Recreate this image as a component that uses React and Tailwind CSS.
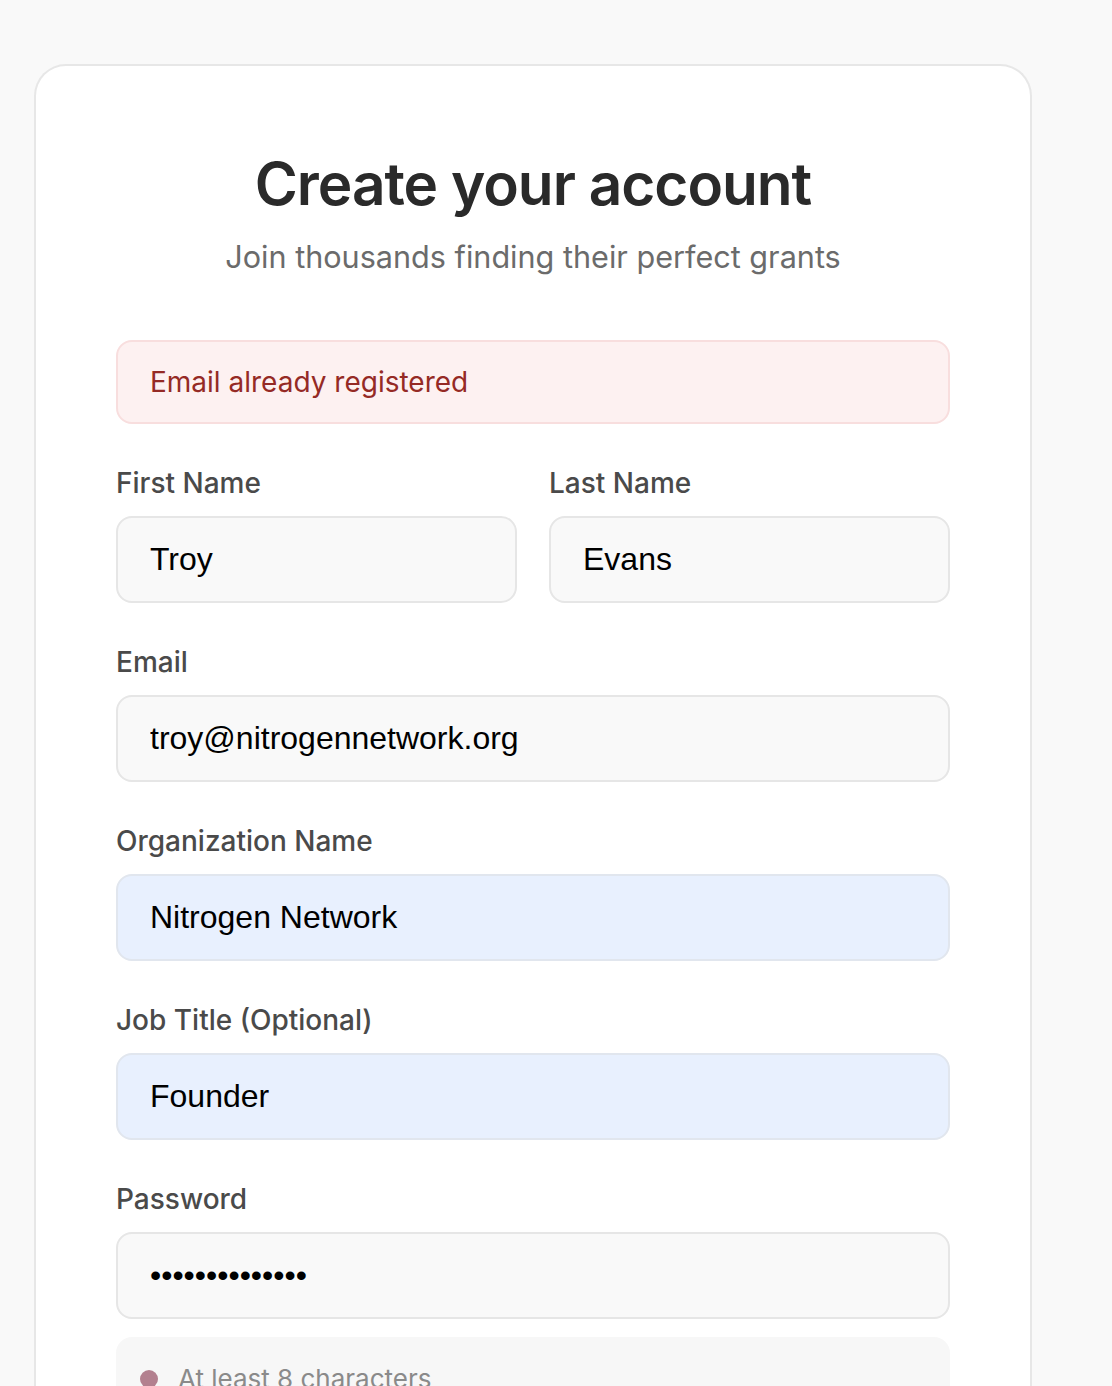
const Field = ({ label, value, type = "text", autofill = false }) => (
  <div className="flex flex-col">
    <label className="mb-[13px] text-[28px] leading-[40px] font-medium text-[#4a4a4a]">
      {label}
    </label>
    <input
      type={type}
      value={value}
      readOnly
      className={`h-[87px] w-full rounded-[16px] border-2 px-[32px] text-[32px] text-black outline-none font-['Liberation_Sans',Arial,sans-serif] ${
        autofill
          ? "bg-[#e8f0fe] border-[#e1e6ee]"
          : "bg-[#f9f9f9] border-[#e6e6e6]"
      }`}
    />
  </div>
);

export default function App() {
  return (
    <div className="relative min-h-[1386px] overflow-hidden bg-[#f9f9f9] pt-[64px] pl-[34px] font-['Inter',sans-serif]">
      <div className="w-[998px] rounded-t-[32px] border-2 border-b-0 border-[#e7e7e7] bg-white px-[80px] pt-[82px] pb-[80px]">
        <h1 className="text-center text-[58.5px] leading-[72px] font-semibold tracking-[-1px] text-[#2a2a2a]">
          Create your account
        </h1>
        <p className="mt-[17px] text-center text-[30.6px] leading-[40px] text-[#6b6b6b]">
          Join thousands finding their perfect grants
        </p>

        <div className="mt-[63px] rounded-[16px] border-2 border-[#f8dede] bg-[#fdf1f1] px-[32px] py-[20px] text-[28px] leading-[40px] text-[#952a25]">
          Email already registered
        </div>

        <div className="mt-[39px] flex flex-col gap-[39px]">
          <div className="grid grid-cols-2 gap-[32px]">
            <Field label="First Name" value="Troy" />
            <Field label="Last Name" value="Evans" />
          </div>
          <Field label="Email" value="troy@nitrogennetwork.org" type="email" />
          <Field label="Organization Name" value="Nitrogen Network" autofill />
          <Field label="Job Title (Optional)" value="Founder" autofill />
          <div className="flex flex-col">
            <Field label="Password" value="Nitrogen2024!!" type="password" />
            <div className="mt-[18px] rounded-[16px] bg-[#f7f7f7] px-[24px] py-[24px]">
              <div className="flex items-center gap-[20px] text-[26px] leading-[36px] text-[#8a8a8a]">
                <span className="h-[18px] w-[18px] rounded-full bg-[#b3808f]" />
                At least 8 characters
              </div>
            </div>
          </div>
        </div>
      </div>
      <div className="pointer-events-none absolute bottom-0 left-0 h-[70px] w-full bg-gradient-to-b from-transparent to-black/[0.06]" />
    </div>
  );
}
